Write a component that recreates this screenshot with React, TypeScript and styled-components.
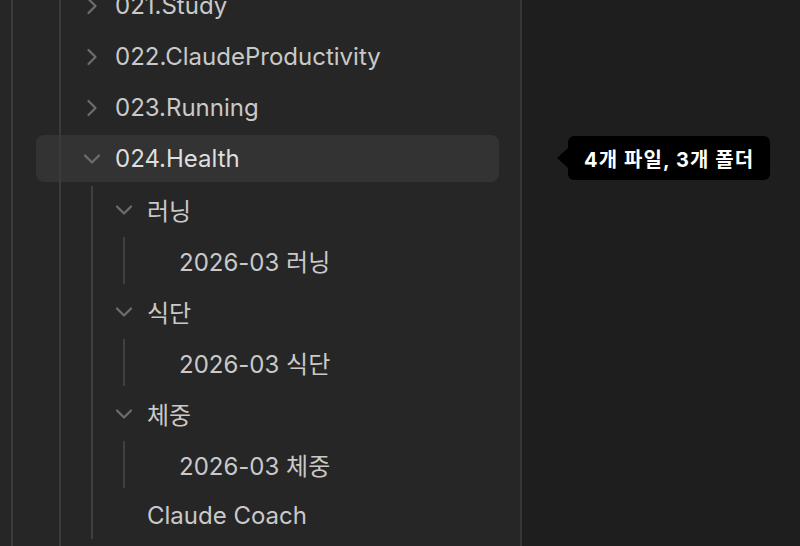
import React from "react";
import styled, { createGlobalStyle } from "styled-components";
import { ChevronDown, ChevronRight } from "lucide-react";

const GlobalStyle = createGlobalStyle`
  html, body {
    margin: 0;
    padding: 0;
    height: 100%;
    overflow: hidden;
    background: #1e1e1e;
  }
  #root {
    height: 100%;
  }
`;

const Page = styled.div`
  display: flex;
  height: 100vh;
  font-family: Inter, "Noto Sans CJK KR", sans-serif;
  position: relative;
`;

const Sidebar = styled.nav`
  width: 520px;
  flex-shrink: 0;
  background: #262626;
  border-right: 2px solid #363636;
  display: flex;
  flex-direction: column;
  overflow: hidden;
`;

const Blank = styled.div`
  flex: 1;
  background: #1e1e1e;
`;

// a folder's children; the guide line sits under the parent's chevron
const Branch = styled.div<{ $guide: number; $fill?: boolean; $tone?: string }>`
  position: relative;
  display: flex;
  flex-direction: column;
  gap: 4px;
  ${(p) => (p.$fill ? "flex: 1;" : "")}

  &::before {
    content: "";
    position: absolute;
    top: 0;
    bottom: 0;
    left: ${(p) => p.$guide}px;
    width: 2px;
    background: ${(p) => p.$tone ?? "#3b3b3b"};
    z-index: 1;
    pointer-events: none;
  }
`;

const Tree = styled(Branch)`
  margin-top: -18px;
`;

const Row = styled.div<{ $depth: number; $active?: boolean }>`
  display: flex;
  align-items: center;
  height: 47px;
  margin-left: ${(p) => 36 + (p.$depth - 1) * 32}px;
  margin-right: 21px;
  padding-left: 42px;
  gap: 9px;
  border-radius: 8px;
  background: ${(p) => (p.$active ? "#333333" : "transparent")};
  color: ${(p) => (p.$active ? "#dedede" : "#c9c9c9")};
  font-size: 24px;
  white-space: nowrap;
`;

const Caret = styled.span`
  width: 28px;
  height: 28px;
  flex-shrink: 0;
  display: flex;
  align-items: center;
  justify-content: center;
  color: #6c6c6c;
`;

const Tooltip = styled.div`
  position: absolute;
  left: 568px;
  top: 136px;
  height: 44px;
  padding: 0 16px;
  display: flex;
  align-items: center;
  background: #000;
  border-radius: 6px;
  color: #fff;
  font-size: 20px;
  font-weight: 700;
  letter-spacing: 1.1px;
  white-space: nowrap;
  z-index: 5;

  &::before {
    content: "";
    position: absolute;
    left: -11px;
    top: 50%;
    transform: translateY(-50%);
    border-style: solid;
    border-width: 10px 11px 10px 0;
    border-color: transparent #000 transparent transparent;
  }
`;

type Node = {
  name: string;
  open?: boolean;
  folder?: boolean;
  active?: boolean;
  children?: Node[];
};

const items: Node[] = [
  { name: "021.Study", folder: true },
  { name: "022.ClaudeProductivity", folder: true },
  { name: "023.Running", folder: true },
  {
    name: "024.Health",
    folder: true,
    open: true,
    active: true,
    children: [
      { name: "러닝", folder: true, open: true, children: [{ name: "2026-03 러닝" }] },
      { name: "식단", folder: true, open: true, children: [{ name: "2026-03 식단" }] },
      { name: "체중", folder: true, open: true, children: [{ name: "2026-03 체중" }] },
      { name: "Claude Coach" },
    ],
  },
];

function Item({ node, depth }: { node: Node; depth: number }) {
  const rowLeft = 36 + (depth - 1) * 32;
  return (
    <>
      <Row $depth={depth} $active={node.active}>
        <Caret>
          {node.folder &&
            (node.open ? (
              <ChevronDown size={28} strokeWidth={1.9} />
            ) : (
              <ChevronRight size={28} strokeWidth={1.9} />
            ))}
        </Caret>
        {node.name}
      </Row>
      {node.open && node.children && (
        <Branch $guide={rowLeft + 55} $tone="#404040">
          {node.children.map((c) => (
            <Item key={c.name} node={c} depth={depth + 1} />
          ))}
        </Branch>
      )}
    </>
  );
}

export default function App() {
  return (
    <>
      <GlobalStyle />
      <Page>
        <Sidebar>
          <Tree $guide={11} $fill>
            <Branch $guide={59} $fill>
              {items.map((n) => (
                <Item key={n.name} node={n} depth={1} />
              ))}
            </Branch>
          </Tree>
        </Sidebar>
        <Blank />
        <Tooltip>4개 파일, 3개 폴더</Tooltip>
      </Page>
    </>
  );
}
